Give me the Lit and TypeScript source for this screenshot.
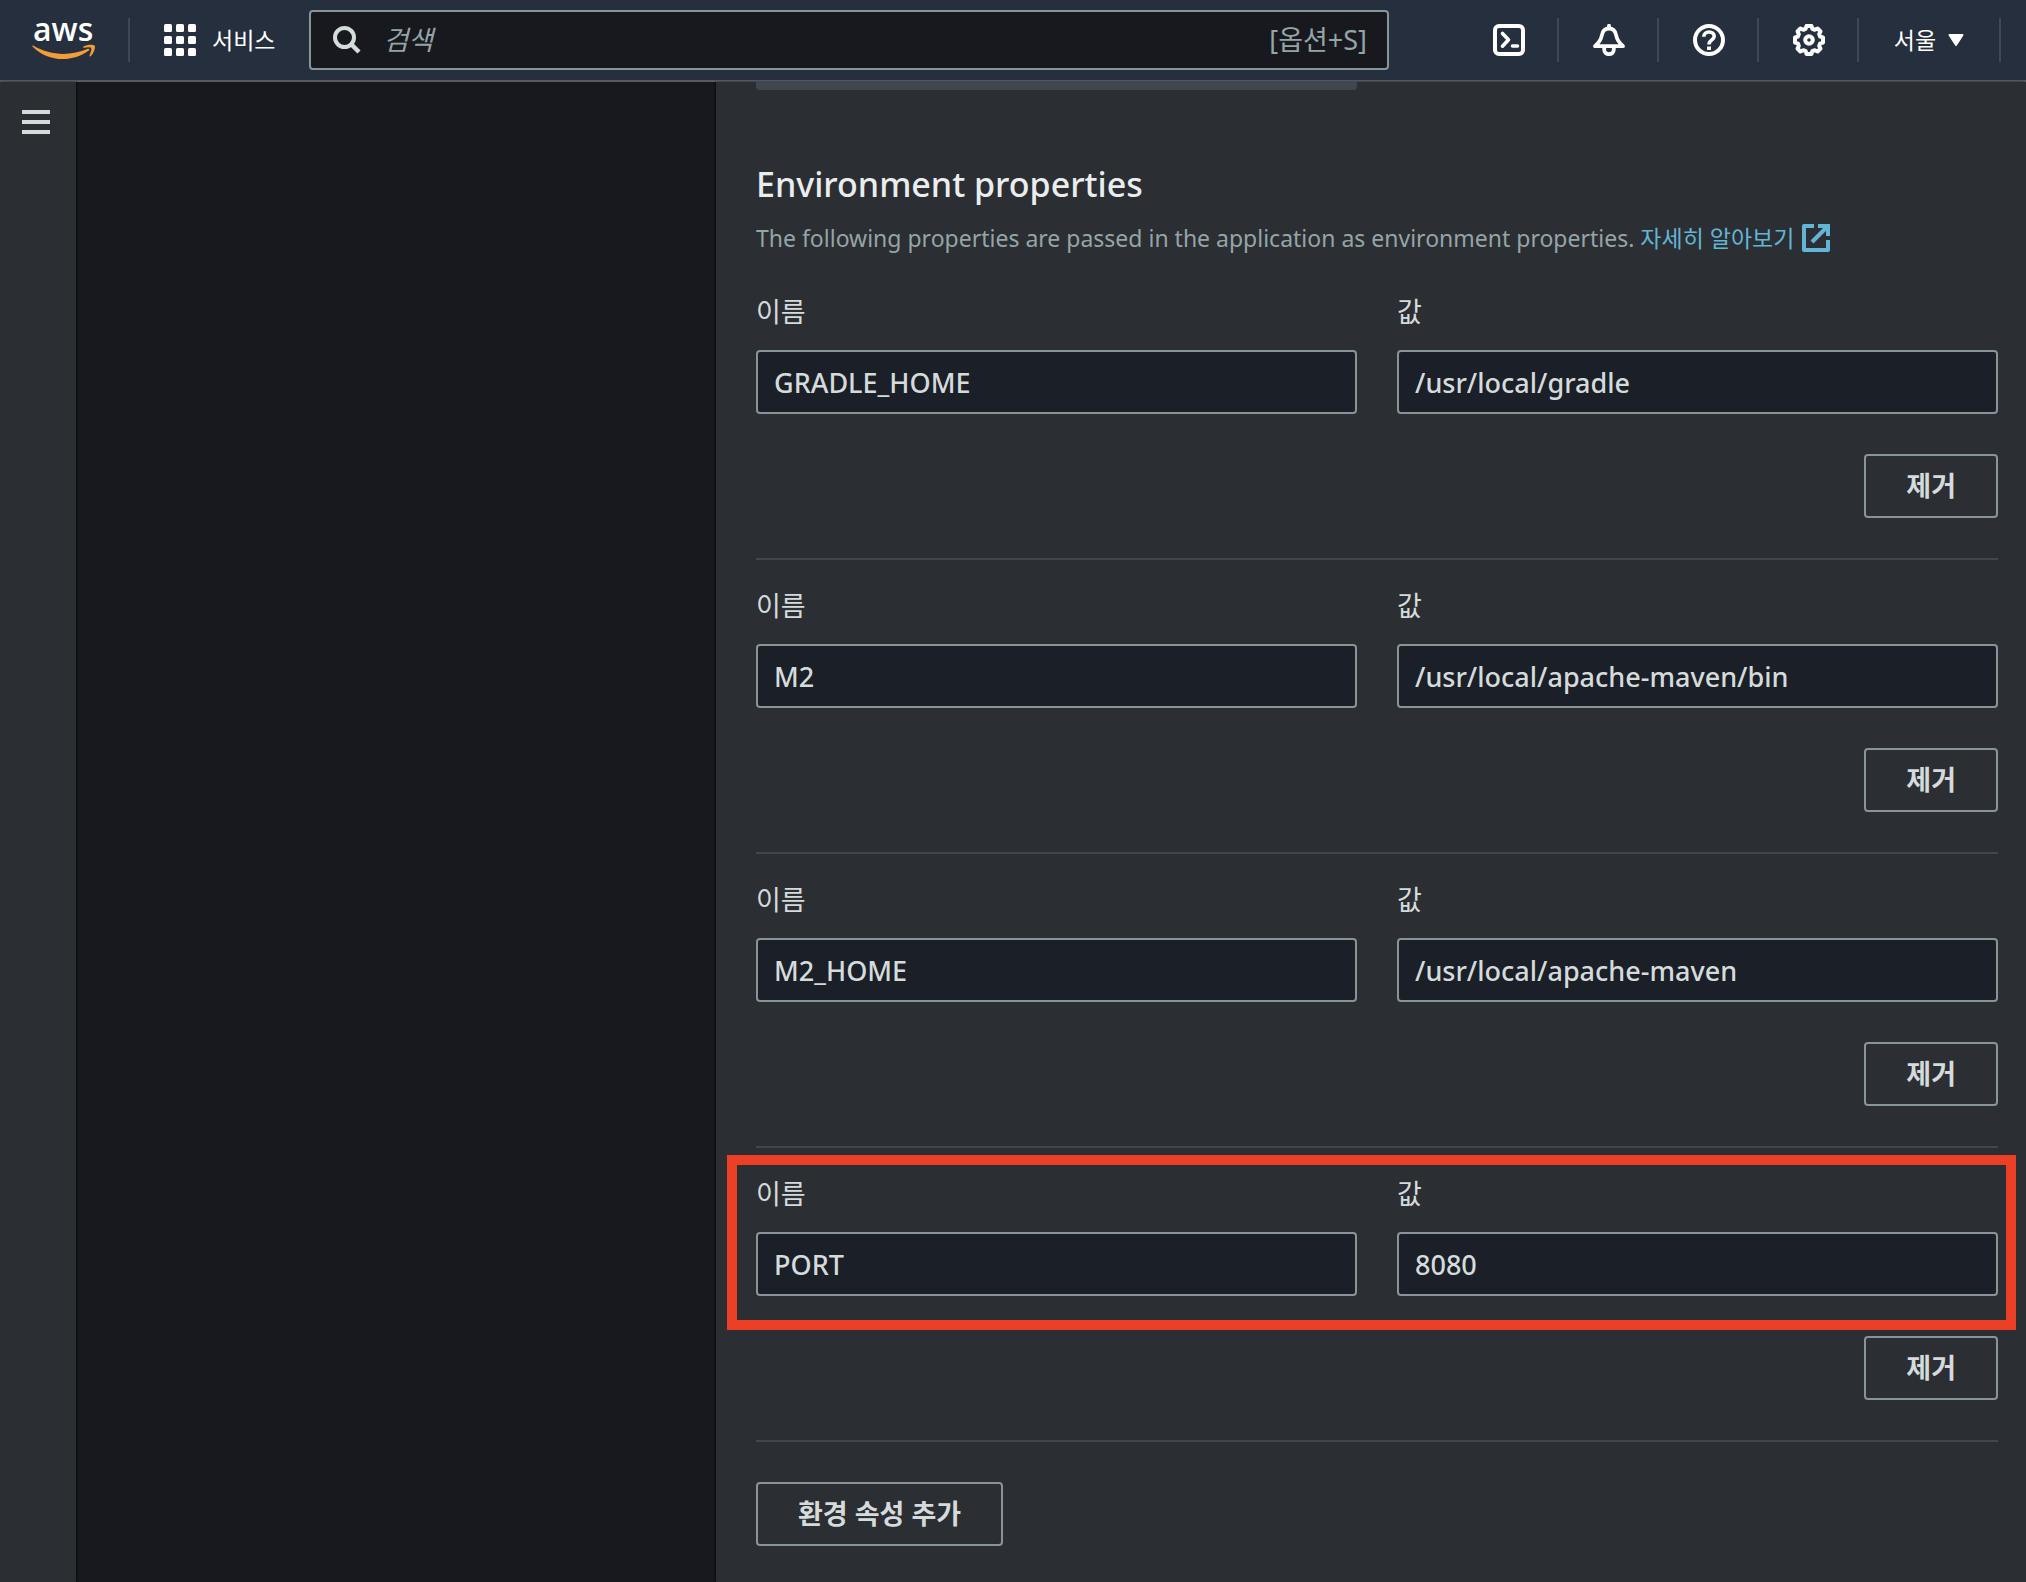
import { LitElement, html, css, svg, nothing } from "lit";
import { customElement, property, state } from "lit/decorators.js";

interface EnvProperty {
  id: number;
  name: string;
  value: string;
  highlighted?: boolean;
}

const cloudShellIcon = svg`
  <svg class="icon" viewBox="0 0 32 32" fill="none" stroke="currentColor" stroke-width="4" aria-hidden="true">
    <rect x="2" y="2" width="28" height="28" rx="4" />
    <path d="M9.500 9.500 L15.500 15.800 L9.500 22.200" stroke-linecap="round" stroke-linejoin="round" stroke-width="3.600" />
    <path d="M19.500 22 H24.500" stroke-linecap="round" stroke-width="3.600" />
  </svg>`;

const bellIcon = svg`
  <svg class="icon" viewBox="0 0 32 32" fill="none" stroke="currentColor" stroke-width="3.800" stroke-linejoin="round" aria-hidden="true">
    <path d="M16 1.800 V4" stroke-linecap="round" />
    <path d="M16 4.500 C11.500 4.500 9.500 7.500 8.800 11.500 C8 16 5.500 19 2 22.200 H30 C26.500 19 24 16 23.200 11.500 C22.500 7.500 20.500 4.500 16 4.500 Z" />
    <path d="M11.200 23 V25.500 C11.200 28.500 13.500 30.200 16 30.200 C18.500 30.200 20.800 28.500 20.800 25.500 V23" />
  </svg>`;

const helpIcon = svg`
  <svg class="icon" viewBox="0 0 32 32" fill="none" stroke="currentColor" stroke-width="4" aria-hidden="true">
    <circle cx="16" cy="16" r="14" />
    <path d="M10.800 12.800 C10.800 9.700 13 8 16 8 C19 8 21.200 9.800 21.200 12.300 C21.200 16 16 15.800 16 20.500" stroke-width="3.600" />
    <path d="M16 22.500 V26" />
  </svg>`;

const gearIcon = svg`
  <svg class="icon" viewBox="0 0 32 32" fill="none" stroke="currentColor" stroke-width="4" stroke-linejoin="round" aria-hidden="true">
    <path d="M13.500 2 H18.500 L19.300 4.800 L21.800 5.800 L24.600 4.500 L27.500 7.400 L26.200 10.200 L27.200 12.700 L30 13.500 V18.500 L27.200 19.300 L26.200 21.800 L27.500 24.600 L24.600 27.500 L21.800 26.200 L19.300 27.200 L18.500 30 H13.500 L12.700 27.200 L10.200 26.200 L7.400 27.500 L4.500 24.600 L5.800 21.800 L4.800 19.300 L2 18.500 V13.500 L4.800 12.700 L5.800 10.200 L4.500 7.400 L7.400 4.500 L10.200 5.800 L12.700 4.800 Z" />
    <circle cx="16" cy="16" r="3.800" />
  </svg>`;

@customElement("console-header")
class ConsoleHeader extends LitElement {
  static styles = css`
    :host {
      display: flex;
      align-items: center;
      box-sizing: border-box;
      height: 82px;
      padding: 0 25px 0 32px;
      border-bottom: 2px solid #545b64;
      background: #262f3e;
      color: #ffffff;
      font: 23px/32px "Noto Sans", "Noto Sans CJK KR", sans-serif;
    }
    button {
      display: flex;
      align-items: center;
      padding: 0;
      border: 0;
      background: none;
      color: inherit;
      font: inherit;
      cursor: pointer;
    }
    .logo {
      flex: none;
      margin-right: 32px;
    }
    .logo svg {
      display: block;
      width: 64px;
      height: 80px;
    }
    .wordmark {
      font: 600 32px "Open Sans", sans-serif;
      fill: #ffffff;
    }
    .separator {
      flex: none;
      width: 2px;
      height: 44px;
      background: #414750;
    }
    .services {
      gap: 16px;
      margin: 0 34px;
    }
    .icon {
      display: block;
      flex: none;
      width: 32px;
      height: 32px;
    }
    .search {
      display: flex;
      flex: 1;
      align-items: center;
      box-sizing: border-box;
      min-width: 0;
      height: 60px;
      margin-right: 70px;
      padding: 0 20px 0 22px;
      border: 2px solid #879596;
      border-radius: 4px;
      background: #18191e;
      color: #95a5a6;
    }
    .search svg {
      flex: none;
      width: 28px;
      height: 28px;
      margin-right: 22px;
      color: #d5dbdb;
    }
    .search input {
      flex: 1;
      min-width: 0;
      padding: 0;
      border: 0;
      outline: 0;
      background: none;
      color: #d5dbdb;
      font: 27px/36px "Noto Sans", "Noto Sans CJK KR", sans-serif;
    }
    .search input::placeholder {
      color: #95a5a6;
      opacity: 1;
      font-style: italic;
    }
    .shortcut {
      font-size: 27px;
    }
    .tool {
      flex: none;
      height: 80px;
      padding: 0 32px 0 34px;
    }
    .region {
      justify-content: center;
      gap: 12px;
      flex: none;
      width: 140px;
      height: 80px;
    }
    .region svg {
      width: 16px;
      height: 12px;
    }
  `;

  render() {
    return html`
      <a class="logo" href="#" aria-label="aws">
        <svg viewBox="0 -16 64 80">
          <text class="wordmark" x="1" y="25">aws</text>
          <path fill="#f29d38" d="M0.500 30.500 C0 29.800 0.800 29.300 1.600 29.800 C18 39.500 38 40.500 55.800 32.800 C57.200 32.300 58 33.600 56.800 34.500 C40 47 15.500 46 0.500 30.500 Z" />
          <path fill="#f29d38" d="M51.500 30.600 C55 28.300 61 28.300 62.600 29.500 C63.700 31 62.200 37 58.600 40.200 C57.800 40.800 57.200 40.400 57.500 39.600 C58.500 37 60 33.200 59 32 C58 30.900 54.500 31.400 52 31.700 C51 31.800 50.800 31.100 51.500 30.600 Z" />
        </svg>
      </a>
      <span class="separator"></span>
      <button class="services" type="button">
        <svg class="icon" viewBox="0 0 32 32" fill="currentColor" aria-hidden="true">
          ${[0, 12, 24].map((y) => [0, 12, 24].map((x) => svg`<rect x=${x} y=${y} width="8" height="8" rx="1.500" />`))}
        </svg>
        서비스
      </button>
      <label class="search">
        <svg viewBox="0 0 28 28" fill="none" stroke="currentColor" stroke-width="4" aria-hidden="true">
          <circle cx="11.500" cy="11.500" r="9.500" />
          <path d="M18.500 18.500 L26 26" stroke-width="4.500" />
        </svg>
        <input type="search" placeholder="검색" />
        <span class="shortcut">[옵션+S]</span>
      </label>
      <button class="tool" type="button" aria-label="CloudShell">${cloudShellIcon}</button>
      <span class="separator"></span>
      <button class="tool" type="button" aria-label="알림">${bellIcon}</button>
      <span class="separator"></span>
      <button class="tool" type="button" aria-label="도움말">${helpIcon}</button>
      <span class="separator"></span>
      <button class="tool" type="button" aria-label="설정">${gearIcon}</button>
      <span class="separator"></span>
      <button class="region" type="button">
        서울
        <svg viewBox="0 0 16 12" fill="currentColor" stroke="currentColor" stroke-width="2" stroke-linejoin="round" aria-hidden="true">
          <path d="M1.500 1 H14.500 L8 11 Z" />
        </svg>
      </button>
      <span class="separator"></span>
    `;
  }
}

@customElement("property-row")
class PropertyRow extends LitElement {
  @property({ attribute: false }) item!: EnvProperty;

  static styles = css`
    :host {
      display: block;
      padding: 24px 0 40px;
      border-bottom: 2px solid #414750;
    }
    .fields {
      position: relative;
      display: grid;
      grid-template-columns: 1fr 1fr;
      gap: 16px 40px;
      grid-auto-flow: column;
      grid-template-rows: 44px 64px;
      margin-bottom: 40px;
    }
    .highlight {
      position: absolute;
      inset: -17px -18px -34px -29px;
      border: 10px solid #eb4026;
      pointer-events: none;
    }
    label {
      font-size: 27px;
      line-height: 44px;
    }
    input {
      box-sizing: border-box;
      width: 100%;
      height: 64px;
      min-width: 0;
      padding: 0 16px;
      border: 2px solid #879596;
      border-radius: 4px;
      background: #1a1f28;
      color: #d5dbdb;
      font: inherit;
      font-size: 27px;
      font-weight: 500;
    }
    .actions {
      display: flex;
      justify-content: flex-end;
    }
    button {
      box-sizing: border-box;
      height: 64px;
      padding: 0 40px 4px;
      border: 2px solid #879596;
      border-radius: 4px;
      background: none;
      color: #d5dbdb;
      font: inherit;
      font-size: 27px;
      font-weight: 700;
      cursor: pointer;
    }
  `;

  private edit(key: "name" | "value", event: Event) {
    const detail = { ...this.item, [key]: (event.target as HTMLInputElement).value };
    this.dispatchEvent(new CustomEvent("property-change", { detail }));
  }

  render() {
    return html`
      <div class="fields">
        <label for="name">이름</label>
        <input id="name" .value=${this.item.name} @input=${(e: Event) => this.edit("name", e)} />
        <label for="value">값</label>
        <input id="value" .value=${this.item.value} @input=${(e: Event) => this.edit("value", e)} />
        ${this.item.highlighted ? html`<div class="highlight"></div>` : nothing}
      </div>
      <div class="actions">
        <button type="button" @click=${() => this.dispatchEvent(new CustomEvent("property-remove"))}>제거</button>
      </div>
    `;
  }
}

@customElement("app-root")
class AppRoot extends LitElement {
  @state() private items: EnvProperty[] = [
    { id: 1, name: "GRADLE_HOME", value: "/usr/local/gradle" },
    { id: 2, name: "M2", value: "/usr/local/apache-maven/bin" },
    { id: 3, name: "M2_HOME", value: "/usr/local/apache-maven" },
    { id: 4, name: "PORT", value: "8080", highlighted: true },
  ];

  static styles = css`
    :host {
      display: flex;
      flex-direction: column;
      min-height: 100vh;
      background: #18191e;
      color: #d5dbdb;
      font-family: "Noto Sans", "Noto Sans CJK KR", sans-serif;
    }
    .body {
      display: flex;
      flex: 1;
    }
    .rail {
      flex: none;
      width: 76px;
      background: #2b2e33;
      box-shadow: 1px 0 2px rgba(0, 0, 0, 0.6);
    }
    .menu {
      display: block;
      margin: 20px 14px;
      padding: 8px;
      border: 0;
      background: none;
      color: #d5dbdb;
      cursor: pointer;
    }
    .menu svg {
      display: block;
      width: 28px;
      height: 24px;
    }
    .steps {
      flex: none;
      width: 640px;
    }
    main {
      flex: 1;
      min-width: 0;
      padding: 0 28px 36px 40px;
      background: #2b2e33;
      box-shadow: -1px 0 2px rgba(0, 0, 0, 0.6);
    }
    .disabled-field {
      width: calc(50% - 20px);
      height: 8px;
      border-radius: 0 0 4px 4px;
      background: #414750;
    }
    h2 {
      margin: 70px 0 12px;
      color: #eaeded;
      font-size: 34px;
      font-weight: 500;
      line-height: 48px;
    }
    .description {
      margin: 0 0 10px;
      color: #95a5a6;
      font-size: 23px;
      line-height: 36px;
    }
    .description a {
      display: inline-flex;
      align-items: center;
      gap: 8px;
      color: #63b5d5;
      text-decoration: none;
      vertical-align: top;
    }
    .description svg {
      width: 28px;
      height: 28px;
    }
    .add {
      box-sizing: border-box;
      height: 64px;
      margin-top: 40px;
      padding: 0 40px 4px;
      border: 2px solid #879596;
      border-radius: 4px;
      background: none;
      color: #d5dbdb;
      font: inherit;
      font-size: 27px;
      font-weight: 700;
      cursor: pointer;
    }
  `;

  private update_(item: EnvProperty) {
    this.items = this.items.map((other) => (other.id === item.id ? item : other));
  }

  private remove_(id: number) {
    this.items = this.items.filter((item) => item.id !== id);
  }

  private add_() {
    const id = Math.max(0, ...this.items.map((item) => item.id)) + 1;
    this.items = [...this.items, { id, name: "", value: "" }];
  }

  render() {
    return html`
      <console-header></console-header>
      <div class="body">
        <nav class="rail">
          <button class="menu" type="button" aria-label="메뉴">
            <svg viewBox="0 0 28 24" fill="currentColor" aria-hidden="true">
              <path d="M0 0H28V4H0Z M0 10H28V14H0Z M0 20H28V24H0Z" />
            </svg>
          </button>
        </nav>
        <div class="steps"></div>
        <main>
          <div class="disabled-field"></div>
          <h2>Environment properties</h2>
          <p class="description">
            The following properties are passed in the application as environment properties.
            <a href="#">자세히 알아보기
              <svg viewBox="0 0 28 28" fill="none" stroke="currentColor" stroke-width="4" aria-hidden="true">
                <path d="M12 2 H2 V26 H26 V16" stroke-linejoin="round" />
                <path d="M16 2 H26 V12" />
                <path d="M10 18 L25 3" />
              </svg>
            </a>
          </p>
          ${this.items.map(
            (item) => html`
              <property-row
                .item=${item}
                @property-change=${(e: CustomEvent<EnvProperty>) => this.update_(e.detail)}
                @property-remove=${() => this.remove_(item.id)}
              ></property-row>
            `,
          )}
          <button class="add" type="button" @click=${this.add_}>환경 속성 추가</button>
        </main>
      </div>
    `;
  }
}
